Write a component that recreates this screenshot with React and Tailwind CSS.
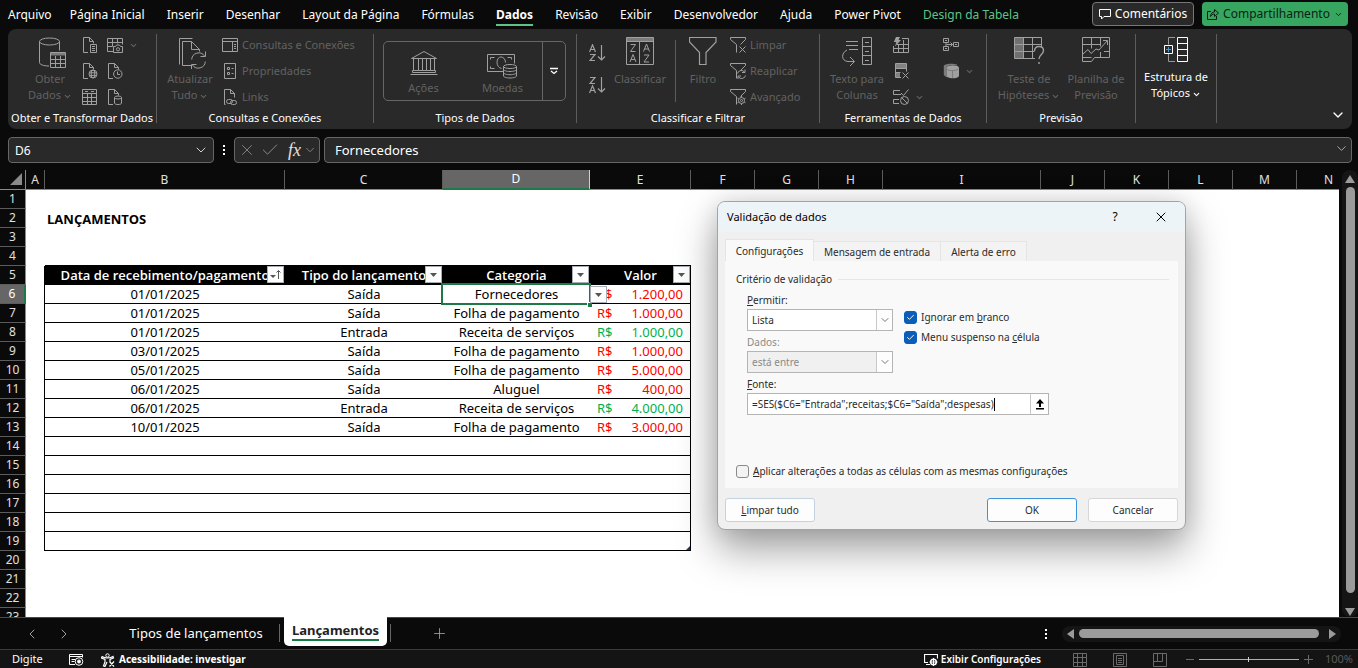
import React, { useState } from "react";
import { ChevronDown, ChevronLeft, ChevronRight, Plus, X, Check } from "lucide-react";

const TABS = [
  "Página Inicial",
  "Inserir",
  "Desenhar",
  "Layout da Página",
  "Fórmulas",
  "Dados",
  "Revisão",
  "Exibir",
  "Desenvolvedor",
  "Ajuda",
  "Power Pivot",
];

const ROWS = [
  { date: "01/01/2025", type: "Saída", category: "Fornecedores", value: "1.200,00" },
  { date: "01/01/2025", type: "Saída", category: "Folha de pagamento", value: "1.000,00" },
  { date: "01/01/2025", type: "Entrada", category: "Receita de serviços", value: "1.000,00" },
  { date: "03/01/2025", type: "Saída", category: "Folha de pagamento", value: "1.000,00" },
  { date: "05/01/2025", type: "Saída", category: "Folha de pagamento", value: "5.000,00" },
  { date: "06/01/2025", type: "Saída", category: "Aluguel", value: "400,00" },
  { date: "06/01/2025", type: "Entrada", category: "Receita de serviços", value: "4.000,00" },
  { date: "10/01/2025", type: "Saída", category: "Folha de pagamento", value: "3.000,00" },
];

const LETTERS = ["A", "B", "C", "D", "E", "F", "G", "H", "I", "J", "K", "L", "M", "N"];

/* ---------- Icons ---------- */

function Icon({ w = 16, h = 16, className = "", children }) {
  return (
    <svg
      width={w}
      height={h}
      viewBox={`0 0 ${w} ${h}`}
      fill="none"
      stroke="currentColor"
      strokeWidth="1"
      className={`shrink-0 ${className}`}
      aria-hidden="true"
    >
      {children}
    </svg>
  );
}

const docPath = "M6 15.5H1.5V.5h6l4 4v2M7.5.5v4h4";

const DatabaseIcon = () => (
  <Icon w={28} h={32} className="ml-1.5">
    <ellipse cx="10.5" cy="4.5" rx="10" ry="3.5" />
    <path d="M.5 4.5v21c0 2 4 3.500 9.500 3.500M20.500 4.500v9" />
    <path d="M11.500 15.500h15v15h-15z" />
    <path d="M11.500 17h15" strokeWidth="3" opacity=".7" />
    <path d="M11.500 22.500h15M11.500 26.500h15M16.500 19v12M21.500 19v12" />
  </Icon>
);

const DocTextIcon = () => (
  <Icon>
    <path d={docPath} />
    <path d="M8.500 7.500h6v8h-6zM10 9.500h3M10 11.500h3M10 13.500h3" />
  </Icon>
);

const DocGlobeIcon = () => (
  <Icon>
    <path d={docPath} />
    <circle cx="11" cy="11" r="4" />
    <ellipse cx="11" cy="11" rx="1.800" ry="4" />
    <path d="M7 9.800h8M7 12.400h8" />
  </Icon>
);

const TableIcon = () => (
  <Icon>
    <path d="M.5.5h14v15H.5zM.5 4.500h14M.5 8.500h14M.5 12.500h14M5.500 4.500v11M9.500 4.500v11M3 2.500h3M9 2.500h3" />
  </Icon>
);

const TableCameraIcon = () => (
  <Icon>
    <path d="M6 14.500H.5V1.500h15v6M.5 5.500h15M.5 9.500h5M5.500 1.500v8M10.500 1.500v5" />
    <path d="M6.500 9.500h2l1-1.500h3l1 1.500h2v6h-9z" />
    <circle cx="11" cy="12.300" r="1.600" />
  </Icon>
);

const DocClockIcon = () => (
  <Icon>
    <path d={docPath} />
    <circle cx="10.800" cy="11" r="4.200" />
    <path d="M10.500 8.500v3h2.500" />
  </Icon>
);

const DocDbIcon = () => (
  <Icon>
    <path d={docPath} />
    <ellipse cx="11" cy="8.500" rx="3.500" ry="1.500" />
    <path d="M7.500 8.500v5.500c0 1 1.500 1.500 3.500 1.500s3.500-.5 3.500-1.500V8.500" />
  </Icon>
);

const RefreshDocsIcon = () => (
  <Icon w={28} h={32} className="ml-1.5">
    <path d="M.5 27.500V1.500h13" />
    <path d="M12 28.500H3.500v-24h9l8 8v2M12.500 4.500v8h8" />
    <path d="M12.700 22.500a7 7 0 0 1 12.800-3.500M26.300 24.500a7 7 0 0 1-12.800 3.500" />
    <path d="M26.500 14.500v5h-5M12.500 32v-4.500h5" />
  </Icon>
);

const PaneIcon = () => (
  <Icon>
    <path d="M.5 1.500h15v13H.5zM.5 4.500h15M10.500 4.500v10M12 7.500h2M12 9.500h2M12 11.500h2" />
  </Icon>
);

const PropsIcon = () => (
  <Icon>
    <path d="M2.500.5h11v15h-11zM5.500 4.500h2v2h-2zM5.500 9.500h2v2h-2zM9.500 5.500h2M9.500 10.500h2" />
  </Icon>
);

const LinksIcon = () => (
  <Icon>
    <path d="M3.500 15.500h-1V.5h6l4 4v4M8.500.5v4h4" />
    <rect x="4.500" y="10.500" width="6" height="4" rx="2" />
    <rect x="8.500" y="11.500" width="6" height="4" rx="2" />
  </Icon>
);

const BankIcon = () => (
  <Icon w={28} h={26}>
    <path d="M1.500 8.500 14 1.500l12.500 7zM3.500 9v11M8.500 9v11M12.500 9v11M16.500 9v11M20.500 9v11M24.500 9v11M2.500 20.500h23v2h-23zM.5 24.500h27" />
  </Icon>
);

const MoneyIcon = () => (
  <Icon w={31} h={26}>
    <path d="M16 18.500H.5v-17h27v9M3.500 6.500v-2h4M3.500 13.500v2h4M24.500 6.500v-2h-4" />
    <path d="M14.500 15.500c-2.500-.5-4.500-3-4.500-6C10 6 11.800 4 14 4s4.500 2 4.500 5.500" />
    <ellipse cx="23" cy="13.500" rx="6.500" ry="2" />
    <path d="M16.500 13.500v9.500c0 1 3 2 6.500 2s6.500-1 6.500-2v-9.500M16.500 16.500c0 1 3 2 6.500 2s6.500-1 6.500-2M16.500 19.700c0 1 3 2 6.500 2s6.500-1 6.500-2" />
  </Icon>
);

const SortIcon = ({ desc }) => (
  <Icon w={17} h={18}>
    <path d={desc ? "M1 1.500h5L1 7.500h5" : "M.5 8 3.500.8 6.500 8M1.500 5.500h4"} strokeWidth="1.200" />
    <path d={desc ? "M.5 17 3.500 9.800 6.500 17M1.500 14.500h4" : "M1 10.500h5L1 16.500h5"} strokeWidth="1.200" />
    <path d="M12.500 1v15M9 12.500l3.500 3.500 3.500-3.500" strokeWidth="1.200" />
  </Icon>
);

const ClassifyIcon = () => (
  <Icon w={28} h={28}>
    <path d="M.5.5h27v27H.5zM.5 4.500h27M13.500 5v22.500" />
    <path d="M1 2.500h26" strokeWidth="3" opacity=".7" />
    <path d="M4.500 7.500h5l-5 7h5M4 25l3-7.500L10 25M5 22.500h4M17.500 14.500l3-7.500 3 7.500M18.500 12h4M18 18h5l-5 7h5" />
  </Icon>
);

const FunnelIcon = () => (
  <Icon w={28} h={28}>
    <path d="M.5.5h26.500v4.500L17 15.500v12h-6.500v-12L.5 5z" strokeWidth="1.200" />
  </Icon>
);

const smallFunnel = "M6.500 7.500 .5 2.500v-2h15v2l-5 5M6.500 7.500v8";

const FilterClearIcon = () => (
  <Icon>
    <path d={smallFunnel} />
    <path d="M9.500 9.500l6 6M15.500 9.500l-6 6" />
  </Icon>
);

const FilterRedoIcon = () => (
  <Icon>
    <path d={smallFunnel} />
    <path d="M7.500 10.500a4 4 0 0 1 7-1.500M15.500 12.500a4 4 0 0 1-7 1.500M15 6.500v3h-3M8 16v-3h3" />
  </Icon>
);

const FilterGearIcon = () => (
  <Icon>
    <path d={smallFunnel} />
    <circle cx="11.500" cy="11.500" r="3" />
    <circle cx="11.500" cy="11.500" r="1" />
    <path d="M11.500 7v1.500M11.500 14.500V16M7.500 9.200l1.300.8M14.200 13l1.300.8M7.500 13.800l1.300-.8M14.200 10l1.300-.8" />
  </Icon>
);

const TextColumnsIcon = () => (
  <Icon w={31} h={31}>
    <path d="M4 4.500h12M4 8.500h12M7 12.500h9" />
    <path d="M5 13C-1 16-1 24 6 24.500h6M8 20l4.500 4.500L8 29" />
    <path d="M20.500.5h9v27h-9zM20.500 9.500h9M20.500 18.500h9M23 5.500h4M23 14.500h4M23 23.500h4" />
  </Icon>
);

const FlashFillIcon = () => (
  <Icon>
    <path d="M.5 9v6.500h15v-14H9M.5 11.500h15M4 7.500h11.500M5.500 8v7.500M10.500 3v12.500" />
    <path d="M3 0h4L5.500 3H8L2 9.500l1.300-4.500H.8z" fill="currentColor" stroke="none" />
  </Icon>
);

const RemoveDupIcon = () => (
  <Icon>
    <path d="M8 14.500H2.500V.5h11v8" />
    <path d="M3 1h10v4H3zM3 10h4v4.500H3z" fill="currentColor" stroke="none" opacity=".75" />
    <path d="M2.500 5.500h11M2.500 9.500h5M9.500 9.500l6 6M15.500 9.500l-6 6" />
  </Icon>
);

const ValidationIcon = () => (
  <Icon>
    <path d="M7 1.500H.5v4H8M8 4l2.500 2.500 5-6M6 10.500H.5v4H6" />
    <circle cx="11.500" cy="11.500" r="4" />
    <path d="M8.700 8.700l5.600 5.600" />
  </Icon>
);

const ConsolidateIcon = () => (
  <Icon>
    <path d="M.5 1.500h5v4h-5zM.5 9.500h5v4h-5zM3 5.500v4M3.500 7.500h6M7.500 5.500l2 2-2 2M10.500 5.500h5v4h-5zM12 7.500h2M2 3.500h2M2 11.500h2" />
  </Icon>
);

const CubeIcon = () => (
  <Icon>
    <path d="M.8 2.500C3 .5 10 0 14 1.500v1C10 1.500 5 2 3.500 4v10.500L.8 12z" fill="currentColor" stroke="none" opacity=".7" />
    <path d="M3.500 4.500c1-3 11.500-3 12.500 0v8.500c-1 3-10 3-12.500.5z" fill="currentColor" stroke="none" />
    <path d="M9.500 7v8M4 6.500c2 1.500 9 1.500 11.500-.5" stroke="#7d7d7d" />
  </Icon>
);

const WhatIfIcon = () => (
  <Icon w={31} h={28}>
    <path d="M1 1h9v20H1z" fill="currentColor" stroke="none" opacity=".6" />
    <path d="M21 21.500H.5V.5h27v10M.5 7.500h27M.5 14.500h20M9.500.5v21M18.500.5v21" />
    <path d="M20.500 14c0-3 2-4.500 4.500-4.500s4.500 1.500 4.500 4c0 4-4.500 4-4.500 8.500M25 25v2" strokeWidth="1.400" />
  </Icon>
);

const ForecastIcon = () => (
  <Icon w={29} h={26}>
    <path d="M.5 24.500V.5h27v20h-15l-3 4zM.5 7.500h18M22 14.500h5.500M9.500.5v11M18.500.5v9M18.500 15v5.500M.5 20.500h9M1 17l5-4.500 3 4 5-4.500 3 1 8-9M21 3.500h4.500V8" />
  </Icon>
);

const OutlineIcon = () => (
  <Icon w={24} h={26}>
    <path d="M11 .5H4.500v7M4.500 17v7.500H11" stroke="#9a9a9a" />
    <path d="M13.500.5h10v24h-10zM13.500 6.500h10M13.500 12.500h10M13.500 18.500h10M.5 8.500h8v8h-8z" />
    <path d="M4.500 10v5M2 12.500h5" stroke="#3a9be0" />
  </Icon>
);

/* ---------- Ribbon ---------- */

function Caret() {
  return <ChevronDown size={9} strokeWidth={3} className="inline-block ml-0.5 shrink-0" />;
}

function BigButton({ icon, lines, caret, className = "", active }) {
  return (
    <button
      className={`flex flex-col items-center pt-[5px] text-[11px] leading-4 whitespace-nowrap ${
        active ? "text-white" : "text-[#626262]"
      } ${className}`}
    >
      <span className={`flex ${active ? "h-8" : "h-[34px] text-[#a0a0a0]"}`}>{icon}</span>
      {lines.map((line, i) => (
        <span key={line}>
          {line}
          {caret && i === lines.length - 1 && <Caret />}
        </span>
      ))}
    </button>
  );
}

function SmallButton({ icon, label, title, caret }) {
  return (
    <button
      title={title}
      className="h-[26px] flex items-center gap-1 text-[11px] text-[#626262] whitespace-nowrap"
    >
      <span className="text-[#a0a0a0]">{icon}</span>
      {label}
      {caret && <Caret />}
    </button>
  );
}

function Group({ title, className = "", children }) {
  return (
    <>
      <section className={`flex flex-col shrink-0 ${className}`}>
        <div className="flex flex-1 pt-[3px]">{children}</div>
        <h2 className="h-[18px] mb-px text-center text-[11px] leading-4 text-white whitespace-nowrap">{title}</h2>
      </section>
      <div className="w-px shrink-0 mt-[5px] mb-1.5 bg-[#5c5c5c]" />
    </>
  );
}

function Ribbon() {
  return (
    <div className="flex h-[100px] ml-2 mr-1.5 rounded-lg bg-[#292929]">
      <Group title="Obter e Transformar Dados" className="w-[148px]">
        <BigButton icon={<DatabaseIcon />} lines={["Obter", "Dados"]} caret className="ml-4 w-[52px]" />
        <div className="ml-1.5">
          <SmallButton icon={<DocTextIcon />} title="De Text/CSV" />
          <SmallButton icon={<DocGlobeIcon />} title="Da Web" />
          <SmallButton icon={<TableIcon />} title="Da Tabela/Intervalo" />
        </div>
        <div className="ml-[9px]">
          <SmallButton icon={<TableCameraIcon />} title="Da Imagem" caret />
          <SmallButton icon={<DocClockIcon />} title="Fontes Recentes" />
          <SmallButton icon={<DocDbIcon />} title="Conexões Existentes" />
        </div>
      </Group>

      <Group title="Consultas e Conexões" className="w-[216px]">
        <BigButton icon={<RefreshDocsIcon />} lines={["Atualizar", "Tudo"]} caret className="ml-[9px] w-12" />
        <div className="ml-2">
          <SmallButton icon={<PaneIcon />} label="Consultas e Conexões" />
          <SmallButton icon={<PropsIcon />} label="Propriedades" />
          <SmallButton icon={<LinksIcon />} label="Links" />
        </div>
      </Group>

      <Group title="Tipos de Dados" className="w-[202px]">
        <div className="flex w-[183px] h-[60px] ml-[9px] mt-[9px] rounded-[5px] border border-[#666666] text-[11px] leading-4 text-[#626262]">
          <button className="flex-1 flex flex-col items-center pt-2">
            <span className="flex h-[30px] text-[#a0a0a0]"><BankIcon /></span>
            Ações
          </button>
          <button className="flex-1 flex flex-col items-center pt-2">
            <span className="flex h-[30px] pt-[3px] text-[#a0a0a0]"><MoneyIcon /></span>
            Moedas
          </button>
          <button title="Mais" className="w-[23px] border-l border-[#666666] flex items-center justify-center text-white">
            <Icon w={8} h={8}>
              <path d="M0 1.500h8M1 4l3 2.500L7 4" strokeWidth="1.300" />
            </Icon>
          </button>
        </div>
      </Group>

      <Group title="Classificar e Filtrar" className="w-[242px]">
        <div className="flex flex-col gap-3.5 ml-3 pt-3 text-[#a0a0a0]">
          <button title="Classificar de A a Z"><SortIcon /></button>
          <button title="Classificar de Z a A"><SortIcon desc /></button>
        </div>
        <BigButton icon={<ClassifyIcon />} lines={["Classificar"]} className="ml-1 w-[60px]" />
        <div className="w-px h-[62px] ml-[5px] mt-2 bg-[#5c5c5c]" />
        <BigButton icon={<FunnelIcon />} lines={["Filtro"]} className="ml-1 w-[46px]" />
        <div className="ml-1">
          <SmallButton icon={<FilterClearIcon />} label="Limpar" />
          <SmallButton icon={<FilterRedoIcon />} label="Reaplicar" />
          <SmallButton icon={<FilterGearIcon />} label="Avançado" />
        </div>
      </Group>

      <Group title="Ferramentas de Dados" className="w-[166px]">
        <BigButton icon={<TextColumnsIcon />} lines={["Texto para", "Colunas"]} className="ml-2 w-[58px]" />
        <div className="ml-[7px] w-[50px]">
          <SmallButton icon={<FlashFillIcon />} title="Preenchimento Relâmpago" />
          <SmallButton icon={<RemoveDupIcon />} title="Remover Duplicatas" />
          <SmallButton icon={<ValidationIcon />} title="Validação de Dados" caret />
        </div>
        <div>
          <SmallButton icon={<ConsolidateIcon />} title="Consolidar" />
          <SmallButton icon={<CubeIcon />} title="Modelo de Dados" caret />
        </div>
      </Group>

      <Group title="Previsão" className="w-[148px]">
        <BigButton icon={<WhatIfIcon />} lines={["Teste de", "Hipóteses"]} caret className="ml-[9px] w-[66px]" />
        <BigButton icon={<ForecastIcon />} lines={["Planilha de", "Previsão"]} className="ml-px w-[66px]" />
      </Group>

      <Group title="" className="w-20">
        <BigButton icon={<OutlineIcon />} lines={["Estrutura de", "Tópicos"]} caret active className="w-20" />
      </Group>

      <button title="Recolher faixa" className="ml-auto mr-1.5 mb-1.5 self-end text-white">
        <ChevronDown size={16} strokeWidth={2} />
      </button>
    </div>
  );
}

/* ---------- Sheet ---------- */

function DropButton({ className = "", sorted, title }) {
  return (
    <button
      title={title}
      className={`absolute size-[17px] flex items-center justify-center bg-[#fdfdfd] border border-[#a9adb5] text-[#555555] ${className}`}
    >
      {sorted ? (
        <Icon w={11} h={11}>
          <path d="M0 6h6L3 9z" fill="currentColor" stroke="none" />
          <path d="M8.500 10V1.500M6.500 3.500l2-2 2 2" />
        </Icon>
      ) : (
        <Icon w={7} h={4}>
          <path d="M0 0h7L3.500 4z" fill="currentColor" stroke="none" />
        </Icon>
      )}
    </button>
  );
}

function RowHeader({ n }) {
  const selected = n === 6;
  return (
    <th
      scope="row"
      className={`h-[19px] p-0 text-center text-[12px] leading-[18px] font-normal border-b border-b-[#5c5c5c] ${
        selected
          ? "bg-[#666666] text-white border-r-2 border-r-[#1d7a46]"
          : "bg-[#0a0a0a] text-[#e0e0e0] border-r border-r-[#8a8a8a]"
      }`}
    >
      {n}
    </th>
  );
}

function DataRow({ n, row }) {
  const color = row.type === "Entrada" ? "text-[#00b050]" : "text-[#ff0000]";
  const cell = "p-0 border-b border-black text-center";
  const selected = n === 6;
  return (
    <tr>
      <RowHeader n={n} />
      <td className="p-0 border-r border-black" />
      <td className={cell}>{row.date}</td>
      <td className={cell}>{row.type}</td>
      <td className={`${cell} relative`}>
        {row.category}
        {selected && (
          <>
            <span className="absolute -inset-0.5 right-[-1px] border-2 border-[#1d7a46]" />
            <span className="absolute -right-0.5 -bottom-1 size-[5px] bg-[#1d7a46] border-t border-l border-white" />
            <DropButton title="Abrir lista" className="left-full top-px z-10" />
          </>
        )}
      </td>
      <td className={`${cell} border-r`}>
        <div className={`flex justify-between px-[7px] ${color}`}>
          <span>R$</span>
          <span>{row.value}</span>
        </div>
      </td>
      <td colSpan={9} />
    </tr>
  );
}

function Sheet() {
  const head = "relative p-0 bg-black text-white font-['Open_Sans',sans-serif] font-semibold border-b border-black";
  return (
    <table className="table-fixed w-[1361px] border-separate border-spacing-0 text-[13px] leading-[18px] text-black bg-white">
      <colgroup>
        <col className="w-[26px]" />
        <col className="w-[19px]" />
        <col className="w-[240px]" />
        <col className="w-[158px]" />
        <col className="w-[147px]" />
        <col className="w-[101px]" />
        <col className="w-16" />
        <col className="w-16" />
        <col className="w-16" />
        <col className="w-[158px]" />
        <col className="w-16" />
        <col className="w-16" />
        <col className="w-16" />
        <col className="w-16" />
        <col className="w-16" />
      </colgroup>
      <thead>
        <tr className="bg-[#0a0a0a]">
          <td className="h-5 p-0 border-b border-r border-b-[#8a8a8a] border-r-[#8a8a8a]">
            <Icon w={13} h={13} className="ml-[9px] text-[#8a8a8a]">
              <path d="M13 0v12H1z" fill="currentColor" stroke="none" />
            </Icon>
          </td>
          {LETTERS.map((l) => (
            <th
              key={l}
              scope="col"
              className={`h-5 p-0 text-[12px] font-normal border-r ${
                l === "D"
                  ? "bg-[#666666] text-white border-b-2 border-b-[#1d7a46] border-r-[#d0d0d0]"
                  : "text-[#e0e0e0] border-b border-b-[#8a8a8a] border-r-[#5c5c5c]"
              }`}
            >
              {l}
            </th>
          ))}
        </tr>
      </thead>
      <tbody>
        <tr><RowHeader n={1} /><td colSpan={14} /></tr>
        <tr>
          <RowHeader n={2} />
          <td />
          <td className="p-0 pl-0.5 font-['Open_Sans',sans-serif] font-bold">LANÇAMENTOS</td>
          <td colSpan={12} />
        </tr>
        <tr><RowHeader n={3} /><td colSpan={14} /></tr>
        <tr>
          <RowHeader n={4} />
          <td />
          <td colSpan={4} className="border-b border-black" />
          <td colSpan={9} />
        </tr>
        <tr>
          <RowHeader n={5} />
          <td className="p-0 border-r border-black" />
          <th scope="col" className={head}>
            Data de recebimento/pagamento
            <DropButton sorted title="Filtrar data" className="right-px top-0" />
          </th>
          <th scope="col" className={head}>
            Tipo do lançamento
            <DropButton title="Filtrar tipo" className="right-px top-0" />
          </th>
          <th scope="col" className={head}>
            Categoria
            <DropButton title="Filtrar categoria" className="right-px top-0" />
          </th>
          <th scope="col" className={head}>
            Valor
            <DropButton title="Filtrar valor" className="right-px top-0" />
          </th>
          <td colSpan={9} />
        </tr>
        {ROWS.map((row, i) => (
          <DataRow key={i} n={i + 6} row={row} />
        ))}
        {[14, 15, 16, 17, 18, 19].map((n) => (
          <tr key={n}>
            <RowHeader n={n} />
            <td className="p-0 border-r border-black" />
            <td colSpan={4} className="relative p-0 border-b border-r border-black">
              {n === 19 && (
                <Icon w={4} h={4} className="absolute right-0 bottom-0 text-[#1f3864]">
                  <path d="M4 0v4H0z" fill="currentColor" stroke="none" />
                </Icon>
              )}
            </td>
            <td colSpan={9} />
          </tr>
        ))}
        {[20, 21, 22, 23].map((n) => (
          <tr key={n}><RowHeader n={n} /><td colSpan={14} /></tr>
        ))}
      </tbody>
    </table>
  );
}

/* ---------- Dialog ---------- */

function SelectField({ id, label, accessKey, value, disabled }) {
  return (
    <div>
      <label htmlFor={id} className={`block leading-4 ${disabled ? "text-[#8a8a8a]" : ""}`}>
        {accessKey ? <><u>{accessKey}</u>{label}</> : label}
      </label>
      <div className="relative mt-px w-[146px]">
        <select
          id={id}
          disabled={disabled}
          className={`block w-full h-[22px] pl-1 appearance-none border border-[#b5b5b5] ${
            disabled ? "bg-[#f0f0f0] text-[#8a8a8a]" : "bg-white"
          }`}
        >
          <option>{value}</option>
        </select>
        <span className="absolute right-px top-px bottom-px w-4 flex items-center justify-center border-l border-[#c8c8c8] bg-[#fdfdfd] text-[#777777] pointer-events-none">
          <ChevronDown size={12} strokeWidth={2} />
        </span>
      </div>
    </div>
  );
}

function CheckField({ checked, onChange, children }) {
  return (
    <label className="flex items-center gap-1 h-5">
      <span className="relative flex">
        <input
          type="checkbox"
          checked={checked}
          onChange={onChange}
          className="size-[13px] appearance-none rounded-[3px] border border-[#8a8a8a] bg-[#f3f3f3] checked:border-[#0a5db8] checked:bg-[#0a5db8]"
        />
        {checked && <Check size={9} strokeWidth={2.5} className="absolute left-0.5 top-0.5 text-white pointer-events-none" />}
      </span>
      <span>{children}</span>
    </label>
  );
}

function ValidationDialog() {
  const [ignoreBlank, setIgnoreBlank] = useState(true);
  const [dropdown, setDropdown] = useState(true);
  const [applyAll, setApplyAll] = useState(false);
  const [source, setSource] = useState('=SES($C6="Entrada";receitas;$C6="Saída";despesas)');
  const button = "w-[90px] h-6 rounded-[3px] border bg-[#fdfdfd]";

  return (
    <div
      role="dialog"
      aria-label="Validação de dados"
      className="absolute left-[717px] top-[31px] w-[469px] rounded-lg overflow-hidden border border-[#a3a3a3] bg-[#f0f0f0] text-[10px] text-[#2b2b2b] shadow-[0_20px_40px_rgba(0,0,0,0.36),0_0_24px_rgba(0,0,0,0.12)]"
    >
      <div className="flex items-center h-[30px] pl-[9px] pr-4 bg-[#ecf4f8] text-[11px] text-black">
        <h2>Validação de dados</h2>
        <button title="Ajuda" className="ml-auto w-4 text-[12px]">?</button>
        <button title="Fechar" className="ml-[30px]"><X size={16} strokeWidth={1.5} /></button>
      </div>

      <div className="px-[7px] pt-[7px] pb-[7px]">
        <div role="tablist" className="flex items-end h-[22px]">
          <button role="tab" aria-selected="true" className="w-[89px] h-full pt-0.5 bg-[#f9f9f9] border border-b-0 border-[#e5e5e5]">
            Configurações
          </button>
          <button role="tab" aria-selected="false" className="w-[127px] h-5 pt-0.5 bg-[#f3f3f3] border border-l-0 border-b-0 border-[#e5e5e5]">
            Mensagem de entrada
          </button>
          <button role="tab" aria-selected="false" className="w-[86px] h-5 pt-0.5 bg-[#f3f3f3] border border-l-0 border-b-0 border-[#e5e5e5]">
            Alerta de erro
          </button>
        </div>

        <div role="tabpanel" className="pt-[10px] pb-[7px] pl-[11px] pr-[9px] bg-[#f9f9f9]">
          <div className="flex items-center gap-1.5 leading-4">
            <h3>Critério de validação</h3>
            <div className="flex-1 h-px bg-[#e6e6e6]" />
          </div>

          <div className="flex mt-[5px] pl-[11px]">
            <div className="flex flex-col gap-[3px]">
              <SelectField id="allow" accessKey="P" label="ermitir:" value="Lista" />
              <SelectField id="data" label="Dados:" value="está entre" disabled />
            </div>
            <div className="ml-[11px] pt-[15px]">
              <CheckField checked={ignoreBlank} onChange={() => setIgnoreBlank(!ignoreBlank)}>
                Ignorar em <u>b</u>ranco
              </CheckField>
              <CheckField checked={dropdown} onChange={() => setDropdown(!dropdown)}>
                Menu suspenso na <u>c</u>élula
              </CheckField>
            </div>
          </div>

          <div className="mt-[3px] pl-[11px]">
            <label htmlFor="source" className="block leading-4"><u>F</u>onte:</label>
            <div className="flex items-center w-[302px] h-[22px] mt-px border border-[#b5b5b5] bg-white">
              <input
                id="source"
                value={source}
                onChange={(e) => setSource(e.target.value)}
                className="[field-sizing:content] max-w-[270px] pl-1 outline-none"
              />
              <span className="w-px h-[13px] bg-black" />
              <button title="Recolher caixa" className="ml-auto w-[18px] h-5 flex items-center justify-center border-l border-[#c8c8c8] text-black">
                <Icon w={8} h={11}>
                  <path d="M4 0 8 4.500H5V8H3V4.500H0zM0 9h8v1.500H0z" fill="currentColor" stroke="none" />
                </Icon>
              </button>
            </div>
          </div>

          <div className="mt-[46px]">
            <CheckField checked={applyAll} onChange={() => setApplyAll(!applyAll)}>
              <u>A</u>plicar alterações a todas as células com as mesmas configurações
            </CheckField>
          </div>
        </div>

        <div className="flex mt-[10px]">
          <button className={`${button} border-[#c3d3e0]`}><u>L</u>impar tudo</button>
          <button className={`${button} ml-auto border-[#3c94dc]`}>OK</button>
          <button className={`${button} ml-[11px] border-[#d6d6d6]`}>Cancelar</button>
        </div>
      </div>
    </div>
  );
}

/* ---------- Bars ---------- */

function MenuBar() {
  return (
    <nav className="flex items-start h-[29px] pl-2 pr-[10px] pt-0.5 text-[12px] text-white whitespace-nowrap">
      <a href="#" className="h-[25px] leading-[25px] mr-[18px]">Arquivo</a>
      <div className="flex gap-[22px]">
        {TABS.map((tab) => (
          <a
            key={tab}
            href="#"
            className={`h-6 leading-[25px] ${tab === "Dados" ? "font-bold border-b-2 border-[#5fc287]" : ""}`}
          >
            {tab}
          </a>
        ))}
        <a href="#" className="h-6 leading-[25px] text-[#5fc287]">Design da Tabela</a>
      </div>
      <button className="ml-auto w-[102px] h-6 flex items-center justify-center gap-1 rounded border border-[#777777] bg-[#292929]">
        <Icon w={12} h={12}>
          <path d="M.5 1.500h11v7H5l-2.500 2.500V8.500h-2z" />
        </Icon>
        Comentários
      </button>
      <button className="ml-2 w-[146px] h-6 flex items-center justify-center gap-1 rounded bg-[#36a660] text-[#0c1f14]">
        <Icon w={12} h={12}>
          <path d="M4 3.500H.5v8h9V8M3.500 8.500c0-3 2-4.500 4-4.500V1.500l4 3.500-4 3.500V6c-2 0-3 1-4 2.500z" />
        </Icon>
        Compartilhamento
        <ChevronDown size={9} strokeWidth={2.5} />
      </button>
    </nav>
  );
}

function FormulaBar() {
  const box = "h-[26px] flex items-center rounded border border-[#666666] bg-[#292929]";
  return (
    <div className="flex items-center mt-2 mb-[7px] ml-2 mr-1.5 text-[13px] text-white">
      <div className={`${box} w-[206px] pl-1.5 pr-1`}>
        <input aria-label="Caixa de nome" defaultValue="D6" className="flex-1 min-w-0 pt-px text-[12px] outline-none" />
        <ChevronDown size={16} strokeWidth={1.5} className="text-[#d0d0d0]" />
      </div>
      <Icon w={2} h={14} className="mx-[9px]">
        <path d="M0 3h2M0 7h2M0 11h2" strokeWidth="2" />
      </Icon>
      <div className={`${box} w-[86px] pl-[3px] text-[#8a8a8a]`}>
        <button title="Cancelar"><X size={18} strokeWidth={1.2} /></button>
        <button title="Inserir" className="ml-1"><Check size={20} strokeWidth={1.2} /></button>
        <button
          title="Inserir função"
          className="ml-2 font-['Liberation_Serif',serif] italic text-[18px] leading-5 text-[#e0e0e0]"
        >
          fx
        </button>
        <ChevronDown size={14} strokeWidth={1.5} className="ml-0.5" />
      </div>
      <div className={`${box} flex-1 ml-1 pl-[10px] pr-0.5`}>
        <input aria-label="Barra de fórmulas" defaultValue="Fornecedores" className="flex-1 pt-px outline-none" />
        <ChevronDown size={15} strokeWidth={1.5} className="mb-1 text-[#b0b0b0]" />
      </div>
    </div>
  );
}

function SheetTabs() {
  return (
    <div className="flex h-8 shrink-0 border-t border-[#4a4a4a] text-[13px] text-white">
      <button title="Anterior" className="ml-6 text-[#a0a0a0]"><ChevronLeft size={16} strokeWidth={1.5} /></button>
      <button title="Próxima" className="ml-4 text-[#a0a0a0]"><ChevronRight size={16} strokeWidth={1.5} /></button>
      <button className="ml-14 w-[136px] whitespace-nowrap">Tipos de lançamentos</button>
      <div className="w-px h-[18px] mt-1.5 ml-[15px] bg-[#666666]" />
      <button className="-mt-px ml-1 w-[103px] h-[29px] pb-0.5 rounded-b-[5px] bg-white text-[#222222] font-bold">
        <span className="border-b-2 border-[#107c41]">Lançamentos</span>
      </button>
      <div className="w-px h-[18px] mt-1.5 ml-[3px] bg-[#666666]" />
      <button title="Nova planilha" className="ml-10 text-[#a0a0a0]"><Plus size={17} strokeWidth={1.2} /></button>
      <div className="ml-auto flex items-center">
        <Icon w={2} h={12} className="mr-[15px]">
          <path d="M0 2h2M0 6h2M0 10h2" strokeWidth="2" />
        </Icon>
        <div className="flex items-center w-[279px] h-4 mr-[17px] px-[5px] rounded-full bg-[#151515] text-[#9b9b9b]">
          <Icon w={7} h={10}><path d="M7 0v10L0 5z" fill="currentColor" stroke="none" /></Icon>
          <div className="flex-1 h-[9px] ml-[5px] mr-[10px] rounded-full bg-[#9b9b9b]" />
          <Icon w={7} h={10}><path d="M0 0v10l7-5z" fill="currentColor" stroke="none" /></Icon>
        </div>
      </div>
    </div>
  );
}

function StatusBar() {
  return (
    <footer className="flex items-center h-[19px] shrink-0 pt-px pl-3 pr-[5px] border-t border-[#3a3a3a] bg-[#141414] text-[10px] text-white whitespace-nowrap">
      <span className="w-[57px] text-[11px]">Digite</span>
      <Icon w={15} h={13}>
        <path d="M6 11.500H.5v-10h13v3M.5 3.500h13M2.500 6.500h4M2.500 8.500h3" />
        <circle cx="10" cy="8.500" r="3.800" />
        <circle cx="10" cy="8.500" r="1.500" fill="currentColor" />
      </Icon>
      <button className="flex items-center gap-1 ml-[17px] font-bold">
        <Icon w={14} h={14}>
          <circle cx="6.500" cy="2.500" r="1.700" />
          <path d="M1 3.500c3 2 8 2 11 0l.5 1.500-3.500 1.500v2M1 3.500.5 5 4 6.500v2.500L2.500 13l1.500.5 2-4.500M8.500 8.500l4.500 5M13 8.500l-4.500 5" strokeWidth="1.200" />
        </Icon>
        Acessibilidade: investigar
      </button>
      <button className="flex items-center gap-[3px] ml-auto font-semibold">
        <Icon w={14} h={13}>
          <path d="M4 9.500H.5v-8h13v4M2 11.500h4" strokeWidth="1.200" />
          <circle cx="9.500" cy="9" r="2.800" strokeWidth="1.500" />
          <path d="M9.500 5v8M5.500 9h8" />
        </Icon>
        Exibir Configurações
      </button>
      <div className="flex gap-[26px] ml-8 text-[#6a6a6a]">
        <button title="Normal">
          <Icon w={14} h={14}><path d="M.5.5h13v13H.5zM.5 4.500h13M.5 9.500h13M4.500.5v13M9.500.5v13" /></Icon>
        </button>
        <button title="Layout da Página">
          <Icon w={14} h={14}><path d="M.5.5h13v13H.5zM3.500 2.500h7v9h-7zM5 5.500h4M5 7.500h4M5 9.500h4" /></Icon>
        </button>
        <button title="Quebra de Página">
          <Icon w={14} h={14}><path d="M.5.5h13v13H.5zM.5 8.500h9v-8M4.500.5v8" /></Icon>
        </button>
      </div>
      <button title="Reduzir" className="ml-[19px] text-[#6a6a6a]">
        <Icon w={8} h={9}><path d="M0 4.500h8" /></Icon>
      </button>
      <input
        type="range"
        aria-label="Zoom"
        defaultValue={50}
        className="w-[100px] h-px mx-[5px] appearance-none bg-[#b0b0b0] [&::-webkit-slider-thumb]:appearance-none [&::-webkit-slider-thumb]:w-px [&::-webkit-slider-thumb]:h-[5px] [&::-webkit-slider-thumb]:bg-[#d0d0d0]"
      />
      <button title="Ampliar" className="text-[#6a6a6a]">
        <Icon w={9} h={9}><path d="M0 4.500h9M4.500 0v9" /></Icon>
      </button>
      <span className="ml-3 text-[11px] text-[#5a5a5a]">100%</span>
    </footer>
  );
}

export default function App() {
  return (
    <div className="flex flex-col h-screen overflow-hidden bg-[#0a0a0a] font-['Noto_Sans','Open_Sans',sans-serif]">
      <MenuBar />
      <Ribbon />
      <FormulaBar />
      <main className="flex flex-1 min-h-0">
        <div className="relative flex-1 min-w-0 overflow-hidden">
          <Sheet />
          <ValidationDialog />
        </div>
        <div className="flex flex-col items-center w-4 ml-[3px] pt-[5px] pb-px rounded-full bg-[#151515] text-[#9b9b9b]">
          <Icon w={10} h={8}><path d="M5 0l5 8H0z" fill="currentColor" stroke="none" /></Icon>
          <div className="flex-1 w-[9px] mt-1 mb-[15px] rounded-full bg-[#9b9b9b]" />
          <Icon w={10} h={8}><path d="M0 0h10L5 8z" fill="currentColor" stroke="none" /></Icon>
        </div>
      </main>
      <SheetTabs />
      <StatusBar />
    </div>
  );
}
